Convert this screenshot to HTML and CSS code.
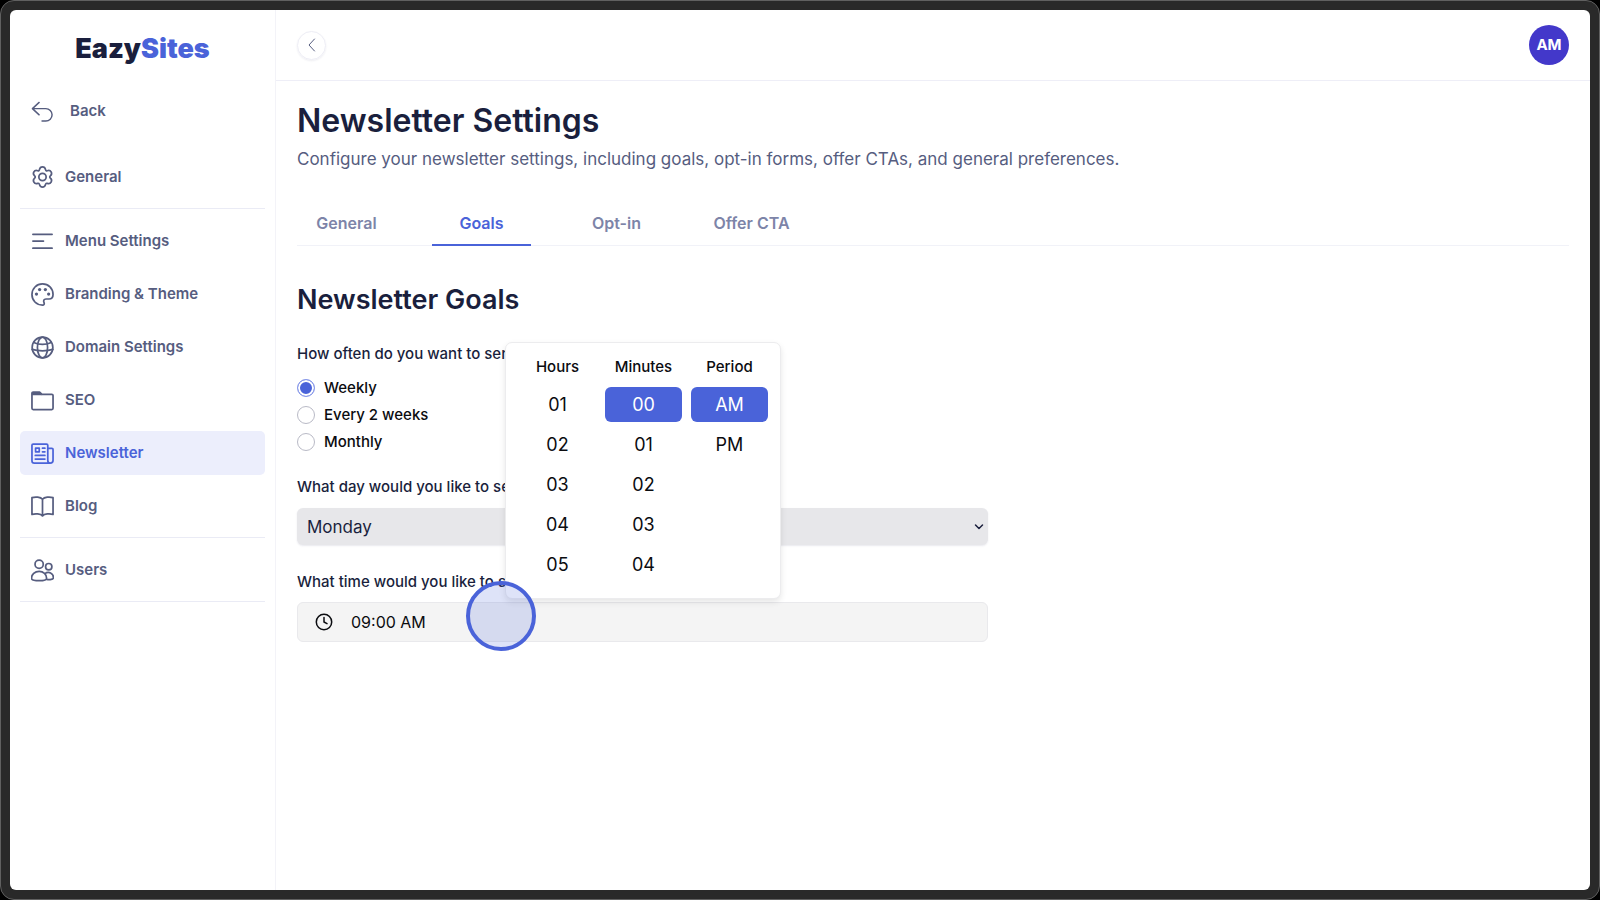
FILE: index.html
```html
<!DOCTYPE html>
<html lang="en">
<head>
<meta charset="utf-8">
<meta name="viewport" content="width=device-width, initial-scale=1">
<title>EazySites – Newsletter Settings</title>
<link rel="stylesheet" href="styles.css">
</head>
<body>
<div class="frame">
  <div class="app">
    <aside class="sidebar">
      <div class="logo">Eazy<span class="logo-accent">Sites</span></div>
      <a class="nav-item nav-back" href="#">
        <svg class="icon" viewBox="0 0 24 24"><path d="M9 3 2 9.500 9 16M2 9.500h14a6.500 6.500 0 0 1 0 13h-4" transform="translate(-.5 -.5)"/></svg>Back</a>
      <nav class="nav">
        <div class="nav-group">
          <a class="nav-item" href="#">
            <svg class="icon" viewBox="0 0 24 24"><path d="M8.800 3.800C9.200 2 9.900 1 12 1s2.800 1 3.200 2.800c.2 1 .9 1.400 1.800 1.100 1.800-.6 3-.5 4 1.300s.6 2.900-.8 4.100c-.8.700-.8 1.700 0 2.400 1.400 1.200 1.800 2.300.8 4.100s-2.200 1.900-4 1.300c-.9-.3-1.600.1-1.800 1.100-.4 1.800-1.100 2.800-3.200 2.800s-2.800-1-3.200-2.800c-.2-1-.9-1.400-1.800-1.100-1.800.6-3 .5-4-1.300s-.6-2.900.8-4.100c.8-.7.8-1.700 0-2.400C2.400 9.100 2 8 3 6.200s2.200-1.900 4-1.300c.9.300 1.600-.1 1.800-1.100z"/><circle cx="12" cy="11.500" r="3.800"/></svg>General</a>
        </div>
        <div class="nav-group">
          <a class="nav-item" href="#">
            <svg class="icon" viewBox="0 0 24 24"><path d="M2 4.500h20M2 11.500h11M2 19h20"/></svg>Menu Settings</a>
          <a class="nav-item" href="#">
            <svg class="icon" viewBox="0 0 24 24"><path d="M12 1C5.800 1 1 5.800 1 12s4.600 11 11 11c1.700 0 2.200-1.200 1.600-2.500-.9-2-.3-3.800 2-3.800h3.200c2.400 0 4.200-1.700 4.200-4.700C23 5.700 18.200 1 12 1z"/><g class="solid"><circle cx="5.700" cy="11.500" r="1.700"/><circle cx="9" cy="6.800" r="1.700"/><circle cx="15" cy="6.800" r="1.700"/><circle cx="18.400" cy="11.500" r="1.700"/></g></svg>Branding &amp; Theme</a>
          <a class="nav-item" href="#">
            <svg class="icon" viewBox="0 0 24 24"><circle cx="12" cy="12" r="10.800"/><ellipse cx="12" cy="12" rx="5.300" ry="10.800"/><path d="M3 6.800c5 2.700 13 2.700 18 0M1.200 14c6 2 15.600 2 21.600 0"/></svg>Domain Settings</a>
          <a class="nav-item" href="#">
            <svg class="icon" viewBox="0 0 24 24"><path d="M1 6V4.500c0-.8.500-1.300 1.300-1.300H9l2.500 2.300h10.200c.8 0 1.300.5 1.300 1.300v13.400c0 .8-.5 1.300-1.300 1.300H2.300c-.8 0-1.300-.5-1.300-1.300z"/><path class="solid" d="M1 6.500V4.500c0-.8.500-1.300 1.300-1.300H9l2.500 3.300z"/></svg>SEO</a>
          <a class="nav-item is-active" href="#" aria-current="page">
            <svg class="icon" viewBox="0 0 24 24"><path d="M20 22H3.500A2.500 2.500 0 0 1 1 19.500V3.500C1 2.700 1.500 2.200 2.300 2.200h13.900c.8 0 1.300.5 1.300 1.300V19c0 2 1 3 2.500 3s3-1 3-3V8c0-.9-.5-1.400-1.300-1.400h-4.200"/><path d="M4.800 6.500h3.800v3.800H4.800zM12 6.500h2.500M12 10.300h2.500M4.500 14h10M4.500 17.800h10"/></svg>Newsletter</a>
          <a class="nav-item" href="#">
            <svg class="icon" viewBox="0 0 24 24"><path d="M12 4.500C10 2 4.500 1.600 1 2.800v17.500c3.500-1.200 9-.8 11 1.500 2-2.300 7.500-2.700 11-1.500V2.800C19.500 1.600 14 2 12 4.500zm0 0v17.300"/></svg>Blog</a>
        </div>
        <div class="nav-group">
          <a class="nav-item" href="#">
            <svg class="icon" viewBox="0 0 24 24"><circle cx="8.500" cy="5.500" r="4.300"/><circle cx="18.500" cy="8" r="3.300"/><path d="M8.500 12.800c-4.500 0-8 3.400-8 7.200 0 3.500 15.800 3.500 15.800 0 0-3.800-3.300-7.200-7.800-7.200zM14.500 15.300c4-3 8.900-.3 8.900 4 0 2.200-3.800 2.600-7.200 2"/></svg>Users</a>
        </div>
      </nav>
    </aside>

    <div class="main">
      <header class="topbar">
        <button class="collapse" type="button" aria-label="Collapse sidebar">
          <svg class="chevron" viewBox="0 0 16 16"><path d="M10.500 2 5 8l5.500 6"/></svg>
        </button>
        <button class="avatar" type="button">AM</button>
      </header>

      <main class="content">
        <h1 class="title">Newsletter Settings</h1>
        <p class="subtitle">Configure your newsletter settings, including goals, opt-in forms, offer CTAs, and general preferences.</p>

        <div class="tabs" role="tablist">
          <button class="tab" type="button" role="tab">General</button>
          <button class="tab is-selected" type="button" role="tab" aria-selected="true">Goals</button>
          <button class="tab" type="button" role="tab">Opt-in</button>
          <button class="tab" type="button" role="tab">Offer CTA</button>
        </div>

        <h2 class="section-title">Newsletter Goals</h2>
        <form class="form">
          <fieldset class="frequency">
            <legend class="label">How often do you want to send</legend>
            <label class="option"><input class="radio" type="radio" name="frequency" checked>Weekly</label>
            <label class="option"><input class="radio" type="radio" name="frequency">Every 2 weeks</label>
            <label class="option"><input class="radio" type="radio" name="frequency">Monthly</label>
          </fieldset>

          <div class="field">
            <label class="label" for="day">What day would you like to send</label>
            <div class="select-wrap">
              <select class="select" id="day"><option>Monday</option></select>
              <svg class="caret" viewBox="0 0 10 10"><path d="M1.500 3 5 6.500 8.500 3"/></svg>
            </div>
          </div>

          <div class="field">
            <label class="label" for="time">What time would you like to send</label>
            <div class="time-box">
              <svg class="clock" viewBox="0 0 18 18"><circle cx="9" cy="9" r="7.700"/><path d="M9 4.500V9l3 1.700"/></svg>
              <input class="time-input" id="time" type="text" value="09:00 AM">
              <div class="picker">
                <div class="picker-col">
                  <div class="picker-head">Hours</div>
                  <button class="pick" type="button">01</button>
                  <button class="pick" type="button">02</button>
                  <button class="pick" type="button">03</button>
                  <button class="pick" type="button">04</button>
                  <button class="pick" type="button">05</button>
                </div>
                <div class="picker-col">
                  <div class="picker-head">Minutes</div>
                  <button class="pick is-picked" type="button">00</button>
                  <button class="pick" type="button">01</button>
                  <button class="pick" type="button">02</button>
                  <button class="pick" type="button">03</button>
                  <button class="pick" type="button">04</button>
                </div>
                <div class="picker-col">
                  <div class="picker-head">Period</div>
                  <button class="pick is-picked" type="button">AM</button>
                  <button class="pick" type="button">PM</button>
                </div>
              </div>
              <span class="pointer"></span>
            </div>
          </div>
        </form>
      </main>
    </div>
  </div>
</div>
</body>
</html>
```
FILE: styles.css
```css
* { box-sizing: border-box; }

body {
  margin: 0;
  background: #000;
  font-family: Inter, "Liberation Sans", sans-serif;
  font-size: 16px;
  line-height: 20px;
  color: #0b0c10;
}

button, input, select { font: inherit; color: inherit; }
button { padding: 0; border: 0; background: none; cursor: pointer; }
svg { display: block; flex: none; fill: none; stroke: currentColor; stroke-linecap: round; stroke-linejoin: round; }

.frame {
  display: flex;
  min-height: 100vh;
  padding: 9px;
  border: 1px solid #606060;
  border-radius: 14px;
  background: #292929;
}

.app {
  display: flex;
  flex: 1;
  border-radius: 6px;
  background: #fff;
}

/* Sidebar */
.sidebar {
  flex: none;
  width: 266px;
  padding: 21px 10px;
  border-right: 1px solid #f3f3f8;
}

.logo {
  margin-bottom: 22px;
  font-size: 27px;
  line-height: 36px;
  font-weight: 900;
  text-align: center;
  color: #1a1f3d;
}
.logo-accent { color: #4a63d9; }

.nav-item {
  display: flex;
  align-items: center;
  gap: 11px;
  height: 44px;
  padding: 0 11px;
  border-radius: 5px;
  font-size: 15px;
  font-weight: 600;
  color: #565d7f;
  text-decoration: none;
}
.nav-back { gap: 16px; margin-bottom: 12px; }
.nav-item.is-active { background: #eceefc; color: #4a63d9; }

.icon { width: 23px; height: 23px; stroke-width: 1.800; }
.nav-back .icon { stroke-width: 1.500; }
.solid { fill: currentColor; stroke: none; }

.nav-group {
  display: flex;
  flex-direction: column;
  gap: 9px;
  padding: 10px 0 9px;
  border-bottom: 1px solid #eaebf5;
}

/* Top bar */
.main { flex: 1; min-width: 0; }

.topbar {
  display: flex;
  align-items: center;
  justify-content: space-between;
  height: 71px;
  padding: 0 21px;
  border-bottom: 1px solid #eeeef7;
}

.collapse {
  display: grid;
  place-items: center;
  width: 29px;
  height: 29px;
  border: 1px solid #ededf5;
  border-radius: 50%;
  box-shadow: 0 1px 2px rgba(40, 40, 90, .08);
  color: #565d7f;
}
.chevron { width: 16px; height: 16px; }

.avatar {
  width: 40px;
  height: 40px;
  border-radius: 50%;
  background: #4338ca;
  color: #fff;
  font-size: 15px;
  font-weight: 700;
}

/* Content */
.content { padding: 20px 21px; }

.title {
  margin: 0;
  font-size: 32px;
  line-height: 40px;
  font-weight: 600;
  color: #1a1f3d;
}
.subtitle {
  margin: 8px 0 33px;
  font-size: 17px;
  line-height: 20px;
  color: #565d7f;
}

.tabs {
  display: flex;
  gap: 36px;
  border-bottom: 1px solid #f1f2f8;
}
.tab {
  min-width: 99px;
  height: 44px;
  margin-bottom: -1px;
  border-bottom: 2px solid transparent;
  font-weight: 600;
  color: #7d84a8;
}
.tab.is-selected { border-color: #4a63d9; color: #4a63d9; }

.section-title {
  margin: 36px 0 26px;
  font-size: 27px;
  line-height: 36px;
  font-weight: 600;
  color: #1a1f3d;
}

.form { width: 55%; min-width: 500px; max-width: 691px; }

.label {
  display: block;
  padding: 0;
  font-size: 15px;
  font-weight: 500;
  color: #1a1f3d;
}

.frequency {
  display: flex;
  flex-direction: column;
  gap: 7px;
  margin: 0;
  padding: 0;
  border: 0;
}
.frequency .label { margin-bottom: 14px; }

.option { display: flex; align-items: center; gap: 9px; font-size: 15px; font-weight: 500; }

.radio {
  appearance: none;
  width: 18px;
  height: 18px;
  margin: 0;
  border: 1px solid #b9bac6;
  border-radius: 50%;
  background: #fff;
}
.radio:checked {
  border-color: #8b9bea;
  background: #4a63d9;
  box-shadow: inset 0 0 0 2px #fff;
}

.field { margin-top: 25px; }
.field + .field { margin-top: 27px; }

.select-wrap { display: grid; align-items: center; margin-top: 11px; }
.select {
  grid-area: 1 / 1;
  appearance: none;
  width: 100%;
  height: 37px;
  padding: 0 10px;
  border: 0;
  border-radius: 6px;
  background: #e7e7ea;
  box-shadow: 0 1px 2px rgba(40, 40, 90, .1);
  font-size: 17px;
  color: #1a1f3d;
}
.caret {
  grid-area: 1 / 1;
  justify-self: end;
  width: 10px;
  height: 10px;
  margin-right: 4px;
  stroke-width: 1.500;
  color: #1a1f3d;
  pointer-events: none;
}

.time-box {
  position: relative;
  display: flex;
  align-items: center;
  gap: 18px;
  height: 40px;
  margin-top: 10px;
  padding: 0 17px;
  border: 1px solid #e9e9ec;
  border-radius: 6px;
  background: #f4f4f4;
}
.clock { width: 18px; height: 18px; stroke-width: 1.500; }
.time-input {
  flex: 1;
  min-width: 0;
  padding: 0;
  border: 0;
  outline: 0;
  background: none;
}

/* Time picker popover */
.picker {
  position: absolute;
  bottom: 42px;
  left: 207px;
  display: flex;
  gap: 9px;
  padding: 14px 12px 16px 13px;
  border: 1px solid #ececee;
  border-radius: 7px;
  background: #fff;
  box-shadow: 0 3px 6px rgba(0, 0, 0, .1);
}
.picker-col { display: flex; flex-direction: column; gap: 5px; width: 77px; }
.picker-head { margin-bottom: 5px; font-size: 15px; font-weight: 500; text-align: center; }
.pick { height: 35px; border-radius: 6px; font-size: 18px; }
.pick.is-picked { background: #4a63d9; color: #fff; }

/* Click highlight */
.pointer {
  position: absolute;
  top: -22px;
  left: 168px;
  width: 70px;
  height: 70px;
  border: 4px solid #4a63d9;
  border-radius: 50%;
  background: rgba(74, 99, 217, .18);
  pointer-events: none;
}
```
